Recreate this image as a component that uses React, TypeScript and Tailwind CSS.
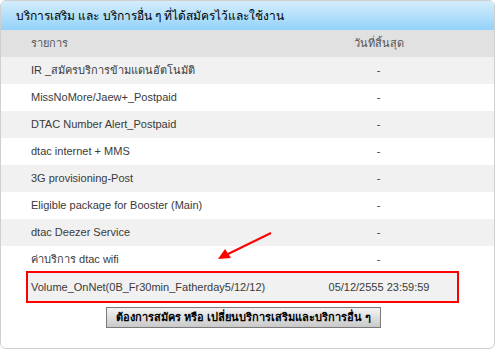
const rows: [string, string][] = [
  ["IR _สมัครบริการข้ามแดนอัตโนมัติ", "-"],
  ["MissNoMore/Jaew+_Postpaid", "-"],
  ["DTAC Number Alert_Postpaid", "-"],
  ["dtac internet + MMS", "-"],
  ["3G provisioning-Post", "-"],
  ["Eligible package for Booster (Main)", "-"],
  ["dtac Deezer Service", "-"],
  ["ค่าบริการ dtac wifi", "-"],
];

export default function App() {
  return (
    <div className="w-[497px] h-[351px] bg-white font-['Liberation_Sans',sans-serif] text-[11px]">
      <div className="relative w-[495px] h-[349px] border border-[#cfcfcf] rounded-[6px] overflow-hidden">
        <div className="h-[29px] flex items-center pl-[15px] bg-gradient-to-b from-[#d4edfc] to-[#92d2f8] text-black text-[12px]">
          บริการเสริม และ บริการอื่น ๆ ที่ได้สมัครไว้และใช้งาน
        </div>
        <div className="grid grid-cols-[262px_1fr] h-[27px] items-center bg-[#e1e1e1] text-[#555]">
          <span className="pl-[30px]">รายการ</span>
          <span className="text-center">วันที่สิ้นสุด</span>
        </div>
        {rows.map(([name, date], i) => (
          <div
            key={name}
            className={`grid grid-cols-[262px_1fr] h-[27px] items-center text-[#3a3a3a] ${i % 2 === 0 ? "bg-[#f1f1f1]" : "bg-white"}`}
          >
            <span className="pl-[30px]">{name}</span>
            <span className="text-center">{date}</span>
          </div>
        ))}
        <div className="-mt-[2px] ml-[25px] w-[433px] h-[32px] border-2 border-[#ff0000] bg-[#f1f1f1] grid grid-cols-[235px_1fr] items-center text-[#3a3a3a]">
          <span className="pl-[3px] whitespace-nowrap">Volume_OnNet(0B_Fr30min_Fatherday5/12/12)</span>
          <span className="text-center pl-[38px] whitespace-nowrap">05/12/2555 23:59:59</span>
        </div>
        <button className="mt-[4px] ml-[105px] w-[275px] h-[21px] border border-[#7a7a7a] bg-gradient-to-b from-[#f4f4f4] to-[#c9c9c9] text-black font-bold text-[11px] flex items-center justify-center">
          ต้องการสมัคร หรือ เปลี่ยนบริการเสริมและบริการอื่น ๆ
        </button>
        <svg className="absolute left-0 top-0 pointer-events-none" width="495" height="349">
          <line x1="270" y1="232" x2="227" y2="253" stroke="#ff0000" strokeWidth="2" />
          <polygon points="217,258 224,248 230,257" fill="#ff0000" />
        </svg>
      </div>
    </div>
  );
}
